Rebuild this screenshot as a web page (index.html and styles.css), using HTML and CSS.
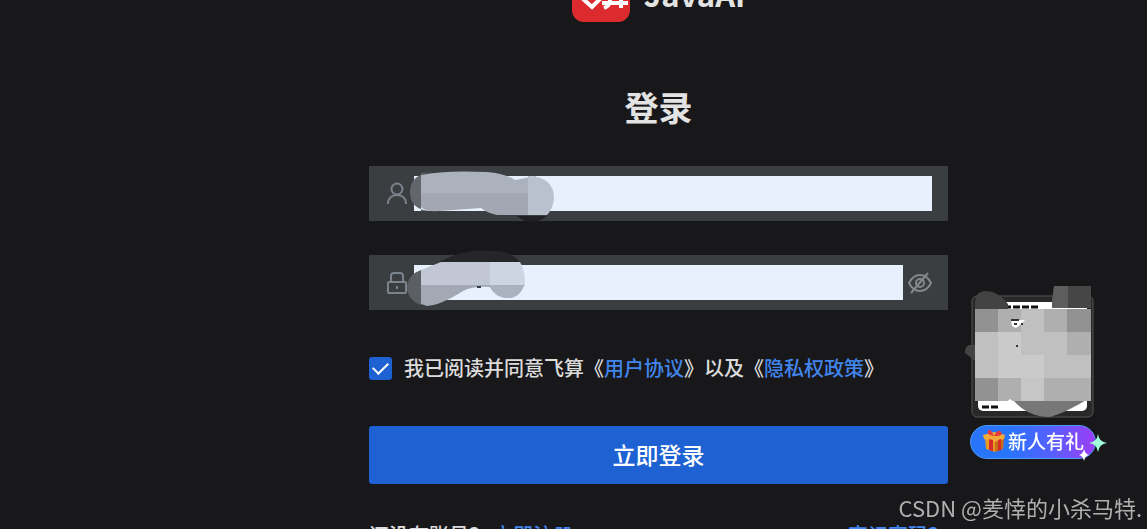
FILE: index.html
```html
<!DOCTYPE html>
<html lang="zh-CN">
  <head>
    <meta charset="UTF-8" />
    <meta name="viewport" content="width=device-width, initial-scale=1.0" />
    <title>登录</title>
    <link rel="stylesheet" href="styles.css">
  </head>
  <body>
    <main class="login">
      <!-- Brand -->
      <div class="brand">
        <svg class="brand-logo" viewBox="0 0 58 58">
          <rect width="58" height="58" rx="12" fill="#dc2a2e" />
          <g fill="none" stroke="#fff" stroke-width="4">
            <path d="M10 34l10 9 10-10M8 26h20" />
            <path d="M30 39h26M38 30v8q-1 4-6 6M49 30v14M33 30h20" />
          </g>
        </svg>
        <span class="brand-name">JavaAI</span>
      </div>

      <h1>登录</h1>

      <form>
        <div class="field">
          <svg class="field-icon" viewBox="0 0 22 24">
            <circle cx="11" cy="7" r="5.5" />
            <path d="M2 22c0-6 4-9 9-9s9 3 9 9" />
          </svg>
          <input type="text" aria-label="账号" />
          <svg class="smudge" viewBox="0 0 579 55">
            <path d="M64 6Q41 8 41 26T62 45H52V7z" fill="#62666a" />
            <path d="M52 9Q75 4 118 6Q138 8 146 14L167 10V29H52z" fill="#abb1bd" />
            <path d="M52 27H160V49H128Q118 47 112 42L70 45Q56 46 52 41z" fill="#a2a7b3" />
            <path d="M159 10Q185 11 185 32Q184 43 178 49H159z" fill="#b9c0ce" />
            <path d="M148 50H178Q162 62 148 50z" fill="#202123" />
          </svg>
        </div>

        <div class="field">
          <svg class="field-icon" viewBox="0 0 22 24">
            <rect x="2" y="11" width="18" height="11" rx="1" />
            <path d="M5 11V5q0-3 3-3h6q3 0 3 3v6M11 15v3" />
          </svg>
          <input type="password" aria-label="密码" />
          <button type="button" class="eye-btn" aria-label="显示密码">
            <svg viewBox="0 0 24 22">
              <path d="M1 11Q5 3 12 3t11 8q-4 8-11 8T1 11z" />
              <circle cx="12" cy="11" r="4" />
              <path d="M20 1L3 21" />
            </svg>
          </button>
          <svg class="smudge" viewBox="0 0 579 55">
            <path d="M70 7Q95-7 125-4Q143-4 151 7z" fill="#242627" />
            <path d="M52 15Q38 20 38 34Q40 46 52 50z" fill="#5b5f63" />
            <path d="M52 15L72 7H121V31H52z" fill="#c1c7d4" />
            <path d="M121 7H151Q156 14 156 31H121z" fill="#cdd4e2" />
            <path d="M52 30H155Q151 43 138 43Q126 42 121 32Q104 31 94 36Q72 50 58 51L52 49z" fill="#a2a9b4" />
            <path d="M121 30H155Q151 43 138 43Q126 42 121 32z" fill="#abb2bf" />
            <path d="M108 31h4v2h-4z" fill="#343c50" />
          </svg>
        </div>

        <label class="agree">
          <input type="checkbox" checked />
          <span>我已阅读并同意飞算《<a href="#">用户协议</a>》以及《<a href="#">隐私权政策</a>》</span>
        </label>

        <button type="submit" class="submit-btn">立即登录</button>
      </form>

      <div class="links">
        <span>还没有账号？<a href="#">立即注册</a></span>
        <a href="#">忘记密码？</a>
      </div>
    </main>

    <!-- Floating gift card -->
    <aside class="gift">
      <svg class="gift-code" viewBox="0 0 132 136">
        <rect x="8" y="13" width="121" height="121" rx="5" fill="#29292a" stroke="#555" />
        <rect x="14" y="19" width="109" height="109" rx="5" fill="#fff" />
        <path d="M40 24h36M18 124h18" stroke="#111" stroke-width="3" stroke-dasharray="7 2" />
        <path d="M11 23Q10 8 22 8t22 13v6H11zM11 62Q0 60 1 70l10 8z" fill="#434344" />
        <path d="M88 18l2-15h37v22H88z" fill="#464647" />
        <path d="M88 18l2-15h14v22H88z" fill="#5d5d5d" />
        <path d="M50 118Q64 134 86 134Q101 130 124 116z" fill="#777" />
        <path d="M11 26h116v92H11z" fill="#c0c0c0" />
        <path d="M11 26h23v23H11zM103 26h24v23h-24zM11 95h23v23H11z" fill="#929292" />
        <path d="M34 26h23v23H34zM80 26h23v23H80zM34 95h23v23H34zM80 95h47v23H80zM103 49h24v23h-24z" fill="#afafaf" />
        <path d="M34 49h23v23H34zM34 72h46v23H34z" fill="#cacaca" />
        <path d="M57 95h23v23H57z" fill="#c6c6c6" />
        <path d="M47 37h14l-4 4-5 4-4-2z" fill="#fff" />
        <path d="M47 37h8M50 41h3M57 41h2M52 63h2" stroke="#333" stroke-width="2" />
        <path d="M38 122l8-6 12 10H38z" fill="#fff" />
      </svg>
      <a href="#" class="gift-btn">
        <svg class="gift-icon" viewBox="0 0 24 24">
          <path d="M3 9l10 3v11L4 20z" fill="#e89a25" />
          <path d="M13 12l9-3-1 11-8 3z" fill="#c86c16" />
          <path d="M1 6l11-3 11 3-1 4-10 3L2 10z" fill="#f3aa38" />
          <path d="M7 10l4 1v11l-4-1zM16 11l3-1v11l-3 1z" fill="#d52c27" />
          <path d="M12 7Q4 6 6 2t6 5q4-8 7-4t-7 4z" fill="#e83b38" />
        </svg>
        新人有礼
        <svg class="gift-stars" viewBox="0 0 28 28">
          <path d="M19 1q1 8 9 9-8 1-9 9-1-8-9-9 8-1 9-9z" fill="#9fffd9" />
          <path d="M5 16q1 5 5 6-4 1-5 6-1-5-5-6 4-1 5-6z" fill="#fff" />
        </svg>
      </a>
    </aside>

    <div class="watermark">CSDN @羑悻的小杀马特.</div>
  </body>
</html>
```
FILE: styles.css
```css
* {
  box-sizing: border-box;
}

body {
  margin: 0;
  min-height: 100vh;
  overflow: hidden;
  padding-left: 170px;
  background-color: #18181a;
  color: #dcdcdc;
  font-family: "Noto Sans CJK SC", sans-serif;
  font-size: 20px;
  font-weight: 500;
  line-height: 30px;
}

a {
  color: #4285ec;
  text-decoration: none;
}

.login {
  width: 60%;
  max-width: 579px;
  margin: 0 auto;
}

/* Brand, partly above the top edge */
.brand {
  display: flex;
  align-items: center;
  justify-content: center;
  gap: 14px;
  height: 58px;
  margin-top: -36px;
}

.brand-logo {
  width: 58px;
  height: 58px;
}

.brand-name {
  padding-top: 2px;
  color: #e3e3e3;
  font-size: 31px;
  font-weight: bold;
}

h1 {
  margin: 60px 0 34px;
  color: #e3e3e3;
  font-size: 34px;
  line-height: 50px;
  text-align: center;
}

/* Form */
.field {
  position: relative;
  display: flex;
  align-items: center;
  height: 55px;
  margin-bottom: 34px;
  padding: 0 16px 0 17px;
  background-color: #3b3e40;
}

.field-icon {
  width: 22px;
  height: 24px;
  margin-right: 6px;
  fill: none;
  stroke: #7b838e;
  stroke-width: 2;
}

.field input {
  flex: 1;
  min-width: 0;
  height: 35px;
  padding: 0;
  border: none;
  background-color: #e8f0fe;
  font: inherit;
}

.eye-btn {
  display: flex;
  margin-left: 5px;
  padding: 0;
  border: none;
  background: none;
}

.eye-btn svg {
  width: 24px;
  height: 22px;
  fill: none;
  stroke: #85878a;
  stroke-width: 2;
}

.smudge {
  position: absolute;
  top: 0;
  left: 0;
  width: 579px;
  height: 55px;
  overflow: visible;
  pointer-events: none;
}

.agree {
  display: flex;
  align-items: center;
  gap: 12px;
  margin-top: 43px;
}

.agree input {
  appearance: none;
  display: grid;
  place-items: center;
  width: 23px;
  height: 23px;
  margin: 0;
  border-radius: 3px;
  background-color: #1d61d2;
}

.agree input:checked::before {
  content: "";
  width: 13px;
  height: 7px;
  margin-bottom: 4px;
  border: solid #fff;
  border-width: 0 0 2px 2px;
  transform: rotate(-45deg);
}

.submit-btn {
  width: 100%;
  height: 58px;
  margin-top: 43px;
  padding: 0 0 2px;
  border: none;
  border-radius: 3px;
  background-color: #1d61d2;
  color: #fff;
  font: 500 23px "Noto Sans CJK SC", sans-serif;
}

.links {
  display: flex;
  justify-content: space-between;
  margin-top: 36px;
}

.links span a {
  margin-left: 4px;
}

/* Floating gift card */
.gift {
  position: fixed;
  right: 51px;
  bottom: 70px;
  width: 132px;
}

.gift-code {
  display: block;
  width: 132px;
  height: 136px;
}

.gift-btn {
  position: relative;
  display: flex;
  align-items: center;
  gap: 2px;
  width: 126px;
  height: 34px;
  margin: 6px 0 0 6px;
  padding: 0 0 2px 11px;
  border: 1px solid #4b9af5;
  border-radius: 17px;
  background: linear-gradient(90deg, #2874fb 30%, #5660ff 65%, #9c3df5);
  color: #fff;
  font-size: 19px;
}

.gift-icon {
  width: 24px;
  height: 24px;
}

.gift-stars {
  position: absolute;
  right: -12px;
  bottom: -3px;
  width: 28px;
  height: 28px;
}

.watermark {
  position: fixed;
  right: 5px;
  bottom: 7px;
  color: #b0b0b1;
  font-size: 22px;
  font-weight: 400;
}
```
